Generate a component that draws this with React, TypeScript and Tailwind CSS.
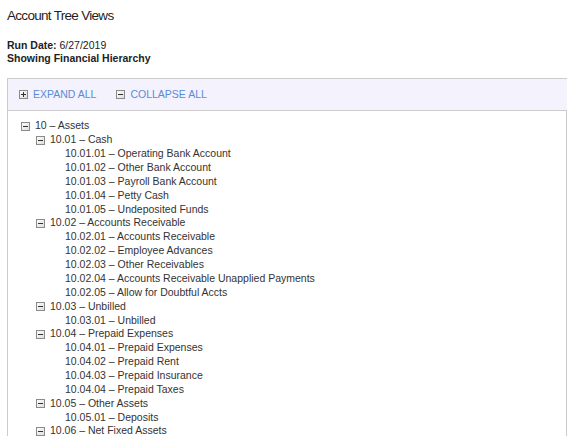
import React from "react";

type Node = { label: string; children?: Node[] };

const tree: Node[] = [
  {
    label: "10 – Assets",
    children: [
      {
        label: "10.01 – Cash",
        children: [
          { label: "10.01.01 – Operating Bank Account" },
          { label: "10.01.02 – Other Bank Account" },
          { label: "10.01.03 – Payroll Bank Account" },
          { label: "10.01.04 – Petty Cash" },
          { label: "10.01.05 – Undeposited Funds" },
        ],
      },
      {
        label: "10.02 – Accounts Receivable",
        children: [
          { label: "10.02.01 – Accounts Receivable" },
          { label: "10.02.02 – Employee Advances" },
          { label: "10.02.03 – Other Receivables" },
          { label: "10.02.04 – Accounts Receivable Unapplied Payments" },
          { label: "10.02.05 – Allow for Doubtful Accts" },
        ],
      },
      {
        label: "10.03 – Unbilled",
        children: [{ label: "10.03.01 – Unbilled" }],
      },
      {
        label: "10.04 – Prepaid Expenses",
        children: [
          { label: "10.04.01 – Prepaid Expenses" },
          { label: "10.04.02 – Prepaid Rent" },
          { label: "10.04.03 – Prepaid Insurance" },
          { label: "10.04.04 – Prepaid Taxes" },
        ],
      },
      {
        label: "10.05 – Other Assets",
        children: [{ label: "10.05.01 – Deposits" }],
      },
      {
        label: "10.06 – Net Fixed Assets",
        children: [
          { label: "10.06.01 – Furniture and Equipment" },
        ],
      },
    ],
  },
];

function BoxIcon({ plus }: { plus?: boolean }) {
  return (
    <svg width="9" height="9" viewBox="0 0 9 9" className="block">
      <defs>
        <linearGradient id={plus ? "gp" : "gm"} x1="0" y1="0" x2="1" y2="1">
          <stop offset="0" stopColor="#ffffff" />
          <stop offset="1" stopColor="#dcdcdc" />
        </linearGradient>
      </defs>
      <rect x="0.5" y="0.5" width="8" height="8" fill={`url(#${plus ? "gp" : "gm"})`} stroke="#8a8a8a" />
      <rect x="2" y="4" width="5" height="1" fill="#333" />
      {plus && <rect x="4" y="2" width="1" height="5" fill="#333" />}
    </svg>
  );
}

function TreeNode({ node, level }: { node: Node; level: number }) {
  const hasChildren = !!node.children && node.children.length > 0;
  return (
    <li>
      <div
        className="flex items-center h-[13.86px] whitespace-nowrap"
        style={{ paddingLeft: level * 15 }}
      >
        <span className="w-[14px] flex-none flex items-center">
          {hasChildren && <BoxIcon />}
        </span>
        <span>{node.label}</span>
      </div>
      {hasChildren && (
        <ul>
          {node.children!.map((c) => (
            <TreeNode key={c.label} node={c} level={level + 1} />
          ))}
        </ul>
      )}
    </li>
  );
}

export default function App() {
  return (
    <div className="font-['Liberation_Sans',Arial,sans-serif] text-[#333] bg-white w-[574px] h-[436px] overflow-hidden">
      <h1 className="pl-[7px] pt-[6px] text-[13.5px] tracking-[-0.7px] leading-[20px] text-[#1e1e28]">
        Account Tree Views
      </h1>
      <div className="pl-[7px] mt-[13px] text-[10.5px] leading-[12.7px] text-[#222]">
        <div>
          <span className="font-bold">Run Date:</span> 6/27/2019
        </div>
        <div className="font-bold">Showing Financial Hierarchy</div>
      </div>
      <div className="ml-[7px] mt-[14px] w-[560px] border-l border-[#cccccc]">
        <div className="h-[33px] bg-[#f3f2fd] border-t border-b border-[#cccccc] flex items-center pl-[11px] text-[10.5px] text-[#5b8bd6]">
          <span className="flex items-center gap-[5px]">
            <BoxIcon plus />
            <span>EXPAND ALL</span>
          </span>
          <span className="flex items-center gap-[5px] ml-[20px]">
            <BoxIcon />
            <span>COLLAPSE ALL</span>
          </span>
        </div>
        <div className="border-r border-[#cccccc] pt-[8px] pl-[13px] pb-4 text-[10.5px] text-[#333]">
          <ul>
            {tree.map((n) => (
              <TreeNode key={n.label} node={n} level={0} />
            ))}
          </ul>
        </div>
      </div>
    </div>
  );
}
